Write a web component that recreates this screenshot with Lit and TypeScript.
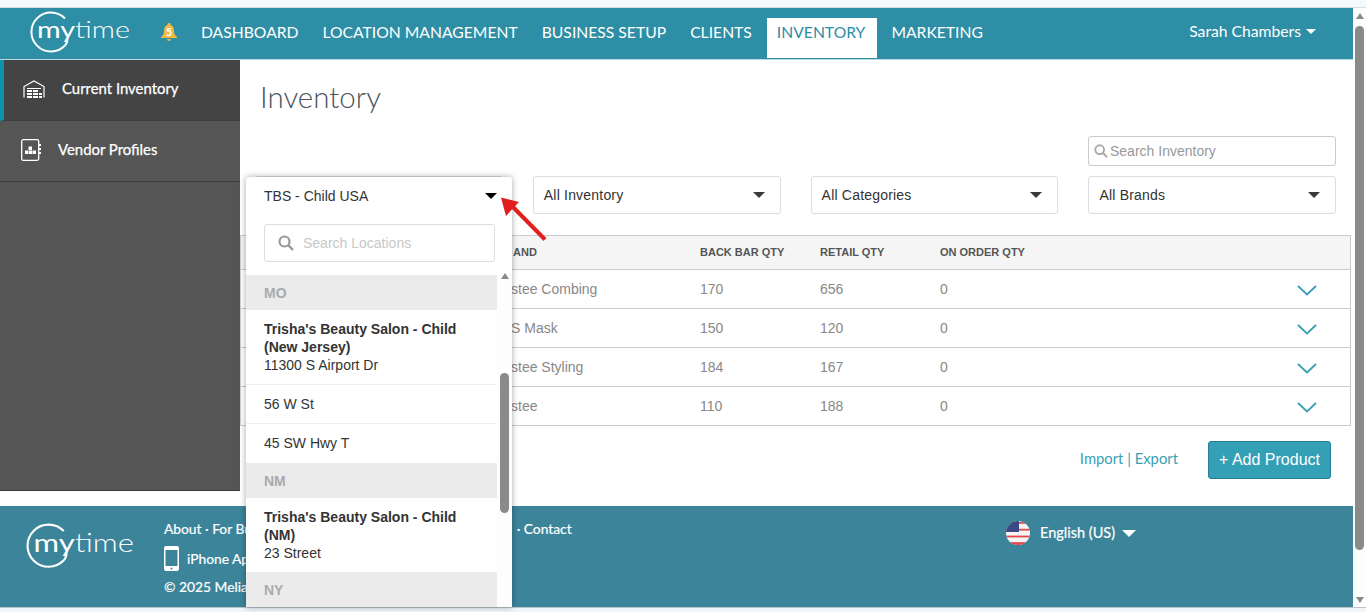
import { html, css, LitElement, svg } from 'lit';
import { customElement } from 'lit/decorators.js';

const navItems = ['DASHBOARD', 'LOCATION MANAGEMENT', 'BUSINESS SETUP', 'CLIENTS', 'INVENTORY', 'MARKETING'];

const rows = [
  { brand: 'stee Combing', back: '170', retail: '656', order: '0' },
  { brand: 'S Mask', back: '150', retail: '120', order: '0' },
  { brand: 'stee Styling', back: '184', retail: '167', order: '0' },
  { brand: 'stee', back: '110', retail: '188', order: '0' },
];

const logo = (width: number) => html`
  <svg class="logo" width=${width} height=${width * 0.44} viewBox="0 0 100 44">
    <path d="M35 7.500A19.500 19.500 0 1 0 35 34.500" fill="none" stroke="#fff" stroke-width="2" />
    <path d="M35 34.500Q37.500 32 37.500 27" fill="none" stroke="#fff" stroke-width="2" />
    <text x="7" y="27" textLength="93" lengthAdjust="spacingAndGlyphs" class="logo-text"><tspan class="my">my</tspan>time</text>
  </svg>
`;

const caret = () => html`<span class="caret"></span>`;

const searchIcon = (size: number, color: string) => html`
  <svg width=${size} height=${size} viewBox="0 0 16 16">
    <circle cx="6.500" cy="6.500" r="5" fill="none" stroke=${color} stroke-width="2.200" />
    <path d="M10.200 10.200L15 15" stroke=${color} stroke-width="2.400" />
  </svg>
`;

const flagStripes = [0, 2, 4, 6].map((i) => svg`<rect x="0" y=${i * 3.4 + 1} width="24" height="1.800" fill="#e2474c" />`);

@customElement('app-root')
export class AppRoot extends LitElement {
  static styles = css`
    :host {
      display: block;
      position: relative;
      width: 1366px;
      height: 612px;
      overflow: hidden;
      background: #eef6fb;
      font-family: 'Liberation Sans', Arial, sans-serif;
      color: #333;
    }
    .strip {
      height: 7px;
      background: #f4f9fc;
      border-bottom: 1px solid #d6e0e4;
    }
    .frame {
      display: flex;
      height: 599px;
      border-bottom: 1px solid #b9c6cc;
    }
    .page {
      width: 1353px;
      display: flex;
      flex-direction: column;
      background: #fff;
    }
    .logo { display: block; }
    .logo-text {
      font-family: Lato, sans-serif;
      font-weight: 300;
      font-size: 24px;
      fill: #fff;
    }
    .logo-text .my { font-weight: 400; }
    header {
      display: flex;
      flex: none;
      align-items: center;
      height: 51px;
      background: #2d8ea5;
      border-bottom: 1px solid #b8dbe3;
      font-family: Lato, sans-serif;
      font-size: 15.700px;
      color: #fff;
      padding-left: 30px;
      padding-right: 37px;
    }
    header .logo { margin-top: -2px; }
    .bell {
      margin-left: 31px;
      margin-right: 14px;
      margin-top: -2px;
      display: block;
    }
    nav { display: flex; gap: 4px; align-self: flex-end; height: 41px; }
    nav a {
      padding: 0 10px;
      line-height: 28px;
      height: 40px;
      box-sizing: border-box;
    }
    nav a.active { background: #fff; color: #2d8ea5; margin-left: 1px; padding-right: 12px; }
    .user { margin-left: auto; display: flex; align-items: center; gap: 5px; margin-bottom: 5px; }
    .caret {
      display: inline-block;
      width: 0;
      height: 0;
      border-left: 5px solid transparent;
      border-right: 5px solid transparent;
      border-top: 5px solid #fff;
    }
    .body { display: flex; height: 446px; flex: none; }
    aside {
      width: 240px;
      height: 431px;
      flex: none;
      background: #555;
      border-bottom: 1px solid #3c3c3c;
      box-sizing: border-box;
      font-family: Lato, sans-serif;
      font-size: 14.900px;
      -webkit-text-stroke: 0.250px #fff;
      color: #fff;
    }
    .side-item {
      height: 61px;
      box-sizing: border-box;
      display: flex;
      align-items: center;
      border-bottom: 1px solid #3e3e3e;
      padding-left: 21px;
      gap: 17px;
      padding-bottom: 3px;
    }
    .side-item span { margin-bottom: 2px; }
    .side-item.active {
      background: #444;
      border-left: 4px solid #0f93ad;
      padding-left: 19px;
      gap: 17px;
    }
    main { flex: 1; min-width: 0; padding-top: 19px; box-sizing: border-box; }
    h1 {
      margin: 0 0 21px 20px;
      font-family: Lato, sans-serif;
      font-weight: 300;
      font-size: 29.500px;
      line-height: 36px;
      color: #4b5560;
    }
    .search-row { display: flex; justify-content: flex-end; padding-right: 17px; }
    .search-box {
      width: 248px;
      height: 30px;
      box-sizing: border-box;
      border: 1px solid #ccc;
      border-radius: 3px;
      display: flex;
      align-items: center;
      gap: 2px;
      padding-left: 5px;
      font-size: 14px;
      color: #999;
    }
    .filters {
      display: grid;
      grid-template-columns: repeat(4, 247.800px);
      column-gap: 30px;
      margin: 10px 0 21px 15px;
    }
    .filter {
      height: 38px;
      box-sizing: border-box;
      border: 1px solid #ddd;
      border-radius: 3px;
      display: flex;
      align-items: center;
      justify-content: space-between;
      padding: 0 15px 0 10px;
      font-size: 14px;
      letter-spacing: 0.200px;
      color: #333;
    }
    .filter .caret { border-left-width: 6.500px; border-right-width: 6.500px; border-top: 6px solid #3a3a3a; }
    .table { margin-right: 2px; border: 1px solid #ccc; }
    .tr {
      display: grid;
      grid-template-columns: 189px 120px 120px 1fr 53px;
      align-items: center;
      height: 39px;
      padding-left: 270px;
      box-sizing: border-box;
      border-bottom: 1px solid #ccc;
      font-size: 14px;
      color: #888;
    }
    .tr:last-child { border-bottom: none; height: 38px; }
    .tr.head {
      height: 34px;
      padding-bottom: 2px;
      background: #f5f5f5;
      font-size: 11px;
      font-weight: 700;
      color: #555;
    }
    .tr.head > span:first-child { padding-left: 2px; }
    .chev { margin-top: 3px; display: block; }
    .actions {
      display: flex;
      justify-content: flex-end;
      align-items: center;
      margin: 15px 22px 0 0;
      gap: 30px;
    }
    .links { font-family: Lato, sans-serif; font-size: 14.800px; color: #3a9fb5; padding-bottom: 5px; }
    .add {
      width: 123px;
      height: 38px;
      box-sizing: border-box;
      background: #34a0b6;
      border: 1px solid #267f93;
      border-radius: 3px;
      color: #fff;
      font-size: 16px;
      display: flex;
      align-items: center;
      justify-content: center;
    }
    footer {
      height: 101px;
      flex: none;
      background: #3b849a;
      color: #fff;
      display: flex;
      font-family: Lato, sans-serif;
      font-size: 13.800px;
      -webkit-text-stroke: 0.200px #fff;
      position: relative;
    }
    footer .logo-text { -webkit-text-stroke: 0; }
    .foot-logo { padding: 17px 0 0 26px; width: 164px; box-sizing: border-box; }
    .foot-text { width: 842px; flex: none; padding-top: 15px; }
    .foot-links { display: flex; line-height: 16px; }
    .foot-links .contact { margin-left: 225px; white-space: pre; }
    .foot-app { display: flex; align-items: center; gap: 8px; margin-top: 8px; height: 26px; }
    .foot-copy { margin-top: 8px; line-height: 16px; }
    .lang {
      display: flex;
      align-items: center;
      height: 24px;
      margin-top: 15px;
      gap: 10px;
      font-size: 14.500px;
    }
    .lang span:not(.caret) { margin-top: -2px; }
    .lang .caret {
      margin-left: -3px;
      border-left-width: 7px;
      border-right-width: 7px;
      border-top-width: 7px;
    }
    .scroll {
      width: 13px;
      background: #fdfdfd;
      position: relative;
      display: flex;
      flex-direction: column;
      align-items: center;
      padding-top: 5px;
      box-sizing: border-box;
    }
    .sb-up {
      width: 0;
      height: 0;
      border-left: 4.500px solid transparent;
      border-right: 4.500px solid transparent;
      border-bottom: 6px solid #8a8a8a;
    }
    .sb-down {
      margin-top: auto;
      margin-bottom: 4px;
      width: 0;
      height: 0;
      border-left: 4.500px solid transparent;
      border-right: 4.500px solid transparent;
      border-top: 6px solid #8a8a8a;
    }
    .sb-thumb {
      width: 9px;
      height: 524px;
      margin-top: 7px;
      margin-right: 1px;
      border-radius: 5px;
      background: #8a8a8a;
    }
    .dropdown {
      position: absolute;
      left: 246px;
      top: 177px;
      width: 266px;
      height: 430px;
      background: #fff;
      border-radius: 3px 3px 0 0;
      box-shadow: 0 0 6px rgba(0, 0, 0, 0.35);
      display: flex;
      flex-direction: column;
      overflow: hidden;
      font-size: 14px;
    }
    .dd-head {
      display: flex;
      align-items: center;
      justify-content: space-between;
      height: 38px;
      flex: none;
      padding: 0 15px 0 18px;
      color: #333;
    }
    .dd-head .caret { border-left-width: 6px; border-right-width: 6px; border-top: 6px solid #000; }
    .dd-search {
      margin: 9px 17px 13px 18px;
      height: 38px;
      flex: none;
      box-sizing: border-box;
      border: 1px solid #ddd;
      border-radius: 3px;
      display: flex;
      align-items: center;
      gap: 9px;
      padding-left: 13px;
      color: #c8c8c8;
    }
    .dd-body { flex: 1; display: flex; min-height: 0; }
    .dd-list { width: 251px; flex: none; }
    .group {
      height: 35px;
      box-sizing: border-box;
      background: #ebebeb;
      padding-left: 18px;
      padding-top: 1px;
      line-height: 35px;
      font-weight: 700;
      color: #aaa;
    }
    .loc {
      padding: 10px 18px;
      line-height: 18px;
      border-bottom: 1px solid #eee;
      color: #333;
    }
    .loc b { display: block; }
    .loc.last { border-bottom-color: transparent; }
    .loc.end { border-bottom: none; }
    .dd-scroll {
      flex: 1;
      background: #fdfdfd;
      display: flex;
      flex-direction: column;
      align-items: center;
    }
    .dd-scroll .sb-up { margin-top: -2px; }
    .dd-scroll .sb-thumb { height: 140px; margin-top: 94px; margin-right: 0; }
    .arrow { position: absolute; left: 495px; top: 190px; pointer-events: none; }
  `;

  render() {
    return html`
      <div class="strip"></div>
      <div class="frame">
        <div class="page">
          <header>
            ${logo(100)}
            <svg class="bell" width="16" height="19" viewBox="0 0 16 19">
              <path d="M8 0a1.500 1.500 0 0 1 1.500 1.800C12 2.600 13 5 13 8c0 3 1 4.500 3 6v1H0v-1c2-1.500 3-3 3-6 0-3 1-5.400 3.500-6.200A1.500 1.500 0 0 1 8 0zM6 16h4a2 2 0 0 1-4 0z" fill="#f0b840" />
              <text x="8" y="13" text-anchor="middle" font-family="Lato, sans-serif" font-size="11" font-weight="700" fill="#fff">5</text>
            </svg>
            <nav>
              ${navItems.map((n) => html`<a class=${n === 'INVENTORY' ? 'active' : ''}>${n}</a>`)}
            </nav>
            <div class="user">Sarah Chambers ${caret()}</div>
          </header>
          <div class="body">
            <aside>
              <div class="side-item active">
                <svg width="22" height="18" viewBox="0 0 22 18" fill="none" stroke="#fff">
                  <path d="M1 17.500V6.500L11 1l10 5.500v11" stroke-width="1.200" />
                  <path d="M4 8.500h14" stroke-width="1" />
                  <g fill="#fff" stroke="none">
                    <rect x="4" y="10" width="5" height="2" /><rect x="10" y="10" width="5" height="2" />
                    <rect x="4" y="13" width="5" height="2" /><rect x="10" y="13" width="5" height="2" /><rect x="16" y="13" width="3" height="2" />
                    <rect x="4" y="16" width="5" height="2" /><rect x="10" y="16" width="5" height="2" /><rect x="16" y="16" width="3" height="2" />
                  </g>
                </svg>
                <span>Current Inventory</span>
              </div>
              <div class="side-item">
                <svg width="20" height="22" viewBox="0 0 20 22" fill="none" stroke="#fff">
                  <rect x="0.700" y="0.700" width="17" height="20.600" rx="1.500" stroke-width="1.300" />
                  <g fill="#fff" stroke="none">
                    <rect x="18" y="5" width="2" height="2" /><rect x="18" y="9" width="2" height="2" /><rect x="18" y="13" width="2" height="2" />
                    <rect x="7.500" y="7.500" width="3.500" height="3.500" /><rect x="4" y="11.500" width="3.500" height="3.500" /><rect x="8" y="11.500" width="3" height="3.500" /><rect x="11.500" y="11.500" width="3.500" height="3.500" />
                  </g>
                </svg>
                <span>Vendor Profiles</span>
              </div>
            </aside>
            <main>
              <h1>Inventory</h1>
              <div class="search-row">
                <div class="search-box">${searchIcon(14, '#aaa')}<span>Search Inventory</span></div>
              </div>
              <div class="filters">
                <div class="filter"></div>
                <div class="filter"><span>All Inventory</span>${caret()}</div>
                <div class="filter"><span>All Categories</span>${caret()}</div>
                <div class="filter"><span>All Brands</span>${caret()}</div>
              </div>
              <div class="table">
                <div class="tr head">
                  <span>AND</span><span>BACK BAR QTY</span><span>RETAIL QTY</span><span>ON ORDER QTY</span><span></span>
                </div>
                ${rows.map(
                  (r) => html`
                    <div class="tr">
                      <span>${r.brand}</span><span>${r.back}</span><span>${r.retail}</span><span>${r.order}</span>
                      <svg class="chev" width="20" height="11" viewBox="0 0 20 11" fill="none"><path d="M1 1l9 8.500L19 1" stroke="#3a9fb5" stroke-width="1.800" /></svg>
                    </div>
                  `
                )}
              </div>
              <div class="actions">
                <span class="links">Import | Export</span>
                <div class="add">+ Add Product</div>
              </div>
            </main>
          </div>
          <footer>
            <div class="foot-logo">${logo(108)}</div>
            <div class="foot-text">
              <div class="foot-links"><span>About · For Business</span><span class="contact"> · Contact</span></div>
              <div class="foot-app">
                <svg width="15" height="25" viewBox="0 0 15 25">
                  <path d="M2 0h11a2 2 0 0 1 2 2v21a2 2 0 0 1-2 2H2a2 2 0 0 1-2-2V2a2 2 0 0 1 2-2zM1.500 4v16h12V4zM7.500 21.500a1 1 0 1 0 0 2 1 1 0 0 0 0-2z" fill="#fff" fill-rule="evenodd" />
                </svg>
                <span>iPhone App</span>
              </div>
              <div class="foot-copy">© 2025 Melian Labs</div>
            </div>
            <div class="lang">
              <svg width="24" height="24" viewBox="0 0 24 24">
                <defs><clipPath id="flag"><circle cx="12" cy="12" r="12" /></clipPath></defs>
                <g clip-path="url(#flag)">
                  <rect width="24" height="24" fill="#f4f4f4" />
                  ${flagStripes}
                  <rect x="0" y="21.400" width="24" height="3" fill="#e2474c" />
                  <rect width="13" height="11" fill="#3b4a86" />
                </g>
              </svg>
              <span>English (US)</span>
              ${caret()}
            </div>
          </footer>
        </div>
        <div class="scroll">
          <div class="sb-up"></div>
          <div class="sb-thumb"></div>
          <div class="sb-down"></div>
        </div>
      </div>

      <div class="dropdown">
        <div class="dd-head"><span>TBS - Child USA</span>${caret()}</div>
        <div class="dd-search">${searchIcon(16, '#999')}<span>Search Locations</span></div>
        <div class="dd-body">
          <div class="dd-list">
            <div class="group">MO</div>
            <div class="loc"><b>Trisha's Beauty Salon - Child (New Jersey)</b>11300 S Airport Dr</div>
            <div class="loc">56 W St</div>
            <div class="loc last">45 SW Hwy T</div>
            <div class="group">NM</div>
            <div class="loc end"><b>Trisha's Beauty Salon - Child (NM)</b>23 Street</div>
            <div class="group">NY</div>
          </div>
          <div class="dd-scroll">
            <div class="sb-up"></div>
            <div class="sb-thumb"></div>
          </div>
        </div>
      </div>

      <svg class="arrow" width="56" height="54" viewBox="0 0 56 54">
        <path d="M50 49.500L16 15" stroke="#e21f1f" stroke-width="4" />
        <path d="M6 7.500L24 12L11 26z" fill="#e21f1f" />
      </svg>
    `;
  }
}
